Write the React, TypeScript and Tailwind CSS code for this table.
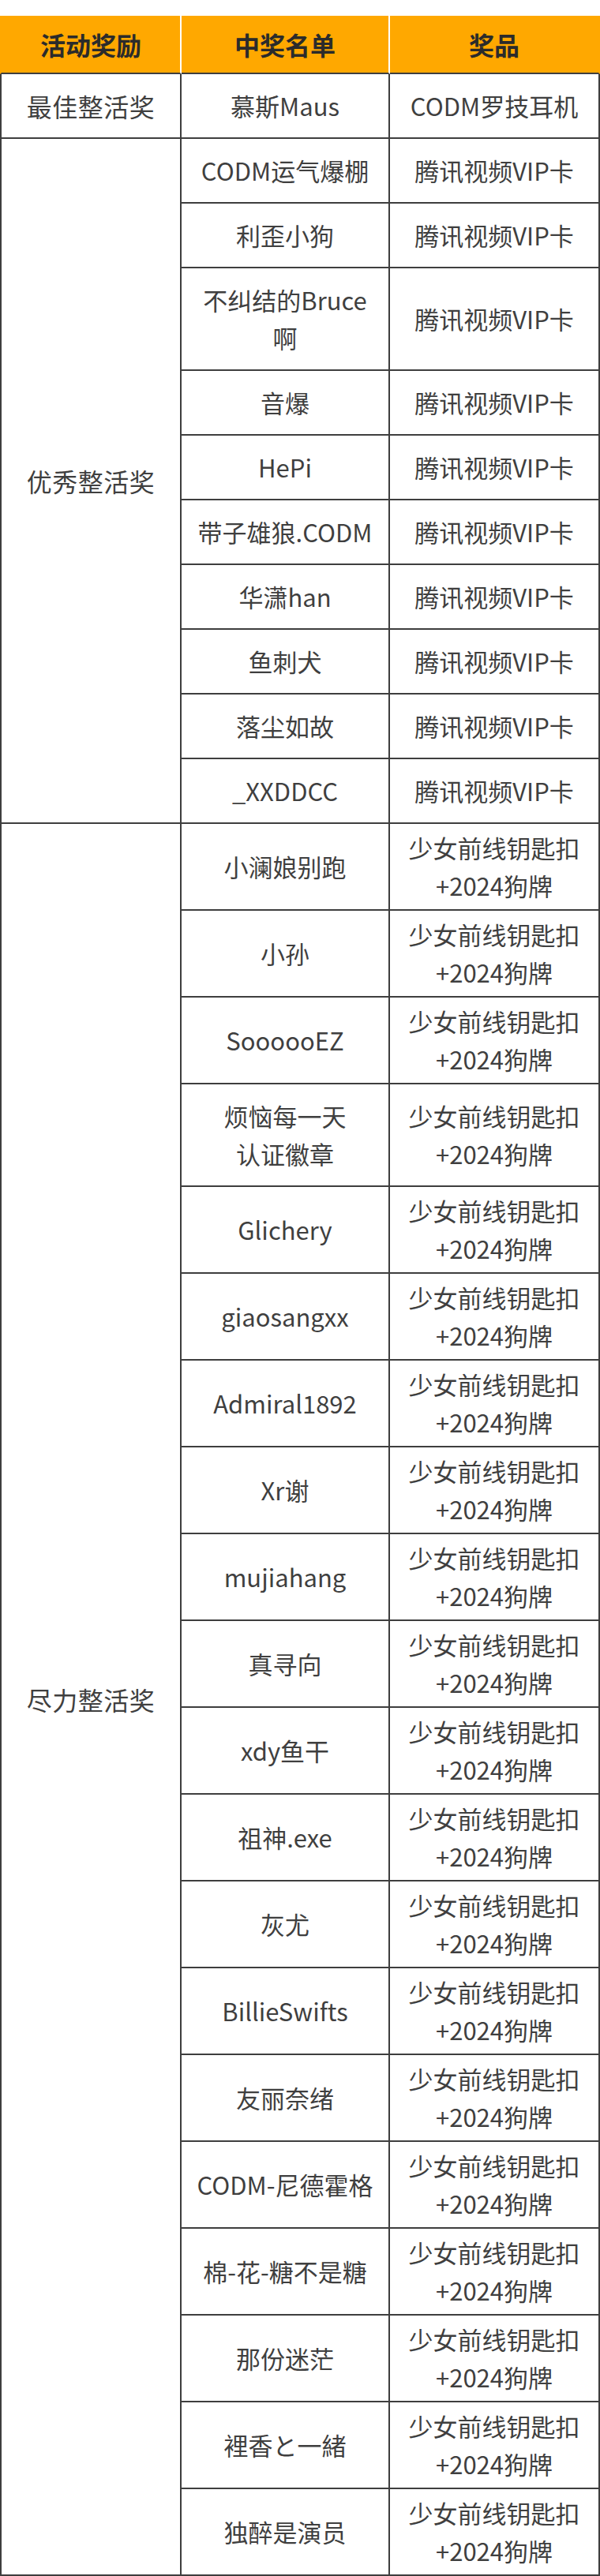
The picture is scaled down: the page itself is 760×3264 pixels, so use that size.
const header = ["活动奖励", "中奖名单", "奖品"];

const excellent = [
  "CODM运气爆棚",
  "利歪小狗",
  "不纠结的Bruce\n啊",
  "音爆",
  "HePi",
  "带子雄狼.CODM",
  "华潇han",
  "鱼刺犬",
  "落尘如故",
  "_XXDDCC",
];

const effort = [
  "小澜娘别跑",
  "小孙",
  "SoooooEZ",
  "烦恼每一天\n认证徽章",
  "Glichery",
  "giaosangxx",
  "Admiral1892",
  "Xr谢",
  "mujiahang",
  "真寻向",
  "xdy鱼干",
  "祖神.exe",
  "灰尤",
  "BillieSwifts",
  "友丽奈绪",
  "CODM-尼德霍格",
  "棉-花-糖不是糖",
  "那份迷茫",
  "裡香と一緒",
  "独醉是演员",
];

function Lines({ text }: { text: string }) {
  const parts = text.split("\n");
  return (
    <>
      {parts.map((p, i) => (
        <span key={i} className="block whitespace-nowrap">
          {p}
        </span>
      ))}
    </>
  );
}

const groupCell =
  "border-l-2 border-r-2 border-b-2 border-[#3e3e3e] text-center align-middle text-[32px] leading-[48px] tracking-[0.5px] text-[#3f3f3f]";
const nameCell =
  "border-r-2 border-b-2 border-[#3e3e3e] py-4 text-center align-middle text-[31px] leading-[48px] text-[#3f3f3f]";
const prizeCell =
  "border-r-2 border-b-2 border-[#3e3e3e] py-[6px] text-center align-middle text-[31px] leading-[48px] text-[#3f3f3f]";

export default function App() {
  return (
    <div
      className="w-[760px] bg-white pt-5"
      style={{ fontFamily: '"Noto Sans CJK SC", "Noto Sans", sans-serif' }}
    >
      <table className="w-[760px] table-fixed border-separate border-spacing-0">
        <colgroup>
          <col className="w-[230px]" />
          <col className="w-[264px]" />
          <col className="w-[266px]" />
        </colgroup>
        <thead>
          <tr>
            {header.map((h, i) => (
              <th
                key={h}
                className={
                  "h-[74px] bg-[#ffa800] border-b-2 border-b-[#3e3e3e] text-center align-middle text-[32px] font-bold text-[#2b2b2b] " +
                  (i === 0 ? "border-l-2 border-l-[#ffa800] border-r-2 border-r-white" : "") +
                  (i === 1 ? "border-r-2 border-r-white" : "") +
                  (i === 2 ? "border-r-2 border-r-[#ffa800]" : "")
                }
              >
                {h}
              </th>
            ))}
          </tr>
        </thead>
        <tbody>
          <tr>
            <td className={groupCell}>最佳整活奖</td>
            <td className={nameCell}>慕斯Maus</td>
            <td className={prizeCell}>CODM罗技耳机</td>
          </tr>

          {excellent.map((name, i) => (
            <tr key={name}>
              {i === 0 && (
                <td rowSpan={excellent.length} className={groupCell}>
                  优秀整活奖
                </td>
              )}
              <td className={nameCell}>
                <Lines text={name} />
              </td>
              <td className={prizeCell}>腾讯视频VIP卡</td>
            </tr>
          ))}

          {effort.map((name, i) => (
            <tr key={name}>
              {i === 0 && (
                <td rowSpan={effort.length} className={groupCell}>
                  尽力整活奖
                </td>
              )}
              <td className={nameCell}>
                <Lines text={name} />
              </td>
              <td className={prizeCell}>
                <Lines text={"少女前线钥匙扣\n+2024狗牌"} />
              </td>
            </tr>
          ))}
        </tbody>
      </table>
    </div>
  );
}
